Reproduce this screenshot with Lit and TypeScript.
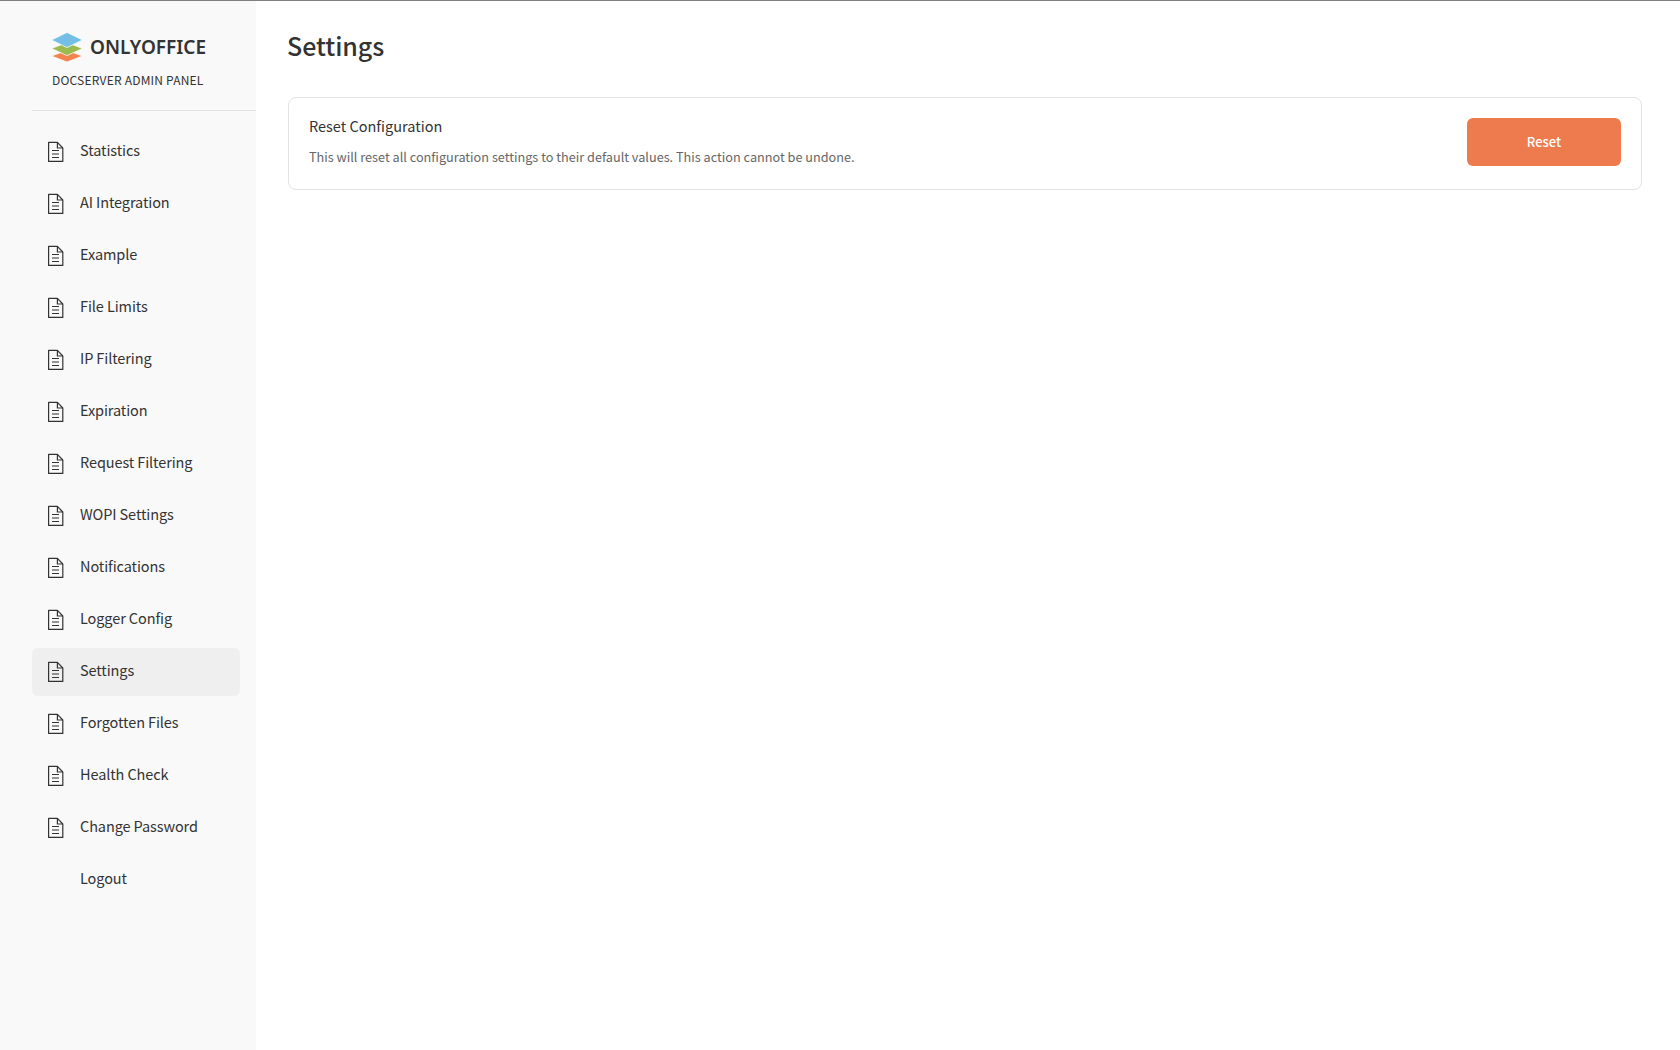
import { LitElement, html, css } from "lit";
import { customElement } from "lit/decorators.js";

const items = ["Statistics","AI Integration","Example","File Limits","IP Filtering","Expiration","Request Filtering","WOPI Settings","Notifications","Logger Config","Settings","Forgotten Files","Health Check","Change Password","Logout"];

@customElement("app-root")
export class AppRoot extends LitElement {
  static styles = css`
    :host { display: block; height: 1050px; font-family: "Noto Sans CJK KR", "Noto Sans", sans-serif; color: #333; background: #fff; overflow: hidden; }
    .frame { display: flex; height: 1050px; box-sizing: border-box; border-top: 1px solid #808080; }
    .side { width: 256px; flex: none; background: #f9f9f9; padding: 0 0 0 32px; box-sizing: border-box; }
    .brand { height: 110px; box-sizing: border-box; padding: 30px 0 0 20px; border-bottom: 1px solid #e2e2e2; }
    .logo { display: flex; align-items: center; gap: 6px; height: 32px; margin-left: -1px; }
    .logo svg { display: block; }
    .word { font-family: "Noto Sans", sans-serif; font-size: 19px; font-weight: 600; color: #333; line-height: 32px; margin-left: 1px; }
    .sub { font-size: 12px; letter-spacing: 0.2px; margin-top: 9px; line-height: 16px; color: #333; }
    nav { display: flex; flex-direction: column; gap: 4px; padding: 17px 16px 0 0; }
    .item { display: flex; align-items: center; height: 48px; padding-left: 16px; gap: 16px; border-radius: 6px; font-size: 14.5px; letter-spacing: -0.1px; color: #333; }
    .item.on { background: #efefef; }
    .ico { width: 16px; height: 22px; flex: none; display: block; }
    .ico.none { visibility: hidden; }
    .item span { margin-bottom: 5px; }
    main { flex: 1; padding: 24px 38px 0 32px; min-width: 0; }
    h1 { margin: 0 0 0 -1px; font-size: 25px; letter-spacing: -0.05px; font-weight: 500; line-height: 40px; color: #333; }
    .card { margin-top: 32px; height: 93px; box-sizing: border-box; border: 1px solid #e2e2e2; border-radius: 8px; padding: 17px 20px 0; display: flex; align-items: flex-start; justify-content: space-between; }
    .title { font-size: 14.5px; color: #333; line-height: 22px; }
    .desc { font-size: 12.7px; color: #666; line-height: 20px; margin-top: 10px; }
    button { width: 154px; height: 48px; margin-top: 3px; background: #ee7b4e; color: #fff; border: 0; border-radius: 6px; font: 500 13px "Noto Sans CJK KR", sans-serif; padding: 0 0 2px; }
  `;

  private icon(hidden: boolean) {
    return html`<svg class="ico ${hidden ? "none" : ""}" viewBox="0 0 16 22" fill="none" stroke="#333" stroke-width="1.2">
      <path d="M0.6 1.4H9.4L14.8 7V20.4H0.6Z" stroke-linejoin="round"/>
      <path d="M9.4 1.4V7H14.8"/>
      <path d="M4 9.5H11M4 13H11M4 16.5H11"/>
    </svg>`;
  }

  render() {
    return html`<div class="frame">
      <aside class="side">
        <div class="brand">
          <div class="logo">
            <svg width="32" height="30" viewBox="0 0 32 30">
              <path d="M16 18.4 L31.5 24 L16 30 L0.5 24 Z" fill="#f4824f" stroke="#f9f9f9" stroke-width="0.8"/>
              <path d="M16 10.5 L31.5 16.5 L16 23.6 L0.5 16.5 Z" fill="#9cbb4e" stroke="#f9f9f9" stroke-width="0.8"/>
              <path d="M16 0.4 L31.5 8 L16 15.6 L0.5 8 Z" fill="#73bfe6" stroke="#f9f9f9" stroke-width="0.8"/>
            </svg>
            <span class="word">ONLYOFFICE</span>
          </div>
          <div class="sub">DOCSERVER ADMIN PANEL</div>
        </div>
        <nav>
          ${items.map((t) => html`<div class="item ${t === "Settings" ? "on" : ""}">${this.icon(t === "Logout")}<span>${t}</span></div>`)}
        </nav>
      </aside>
      <main>
        <h1>Settings</h1>
        <div class="card">
          <div>
            <div class="title">Reset Configuration</div>
            <div class="desc">This will reset all configuration settings to their default values. This action cannot be undone.</div>
          </div>
          <button>Reset</button>
        </div>
      </main>
    </div>`;
  }
}
